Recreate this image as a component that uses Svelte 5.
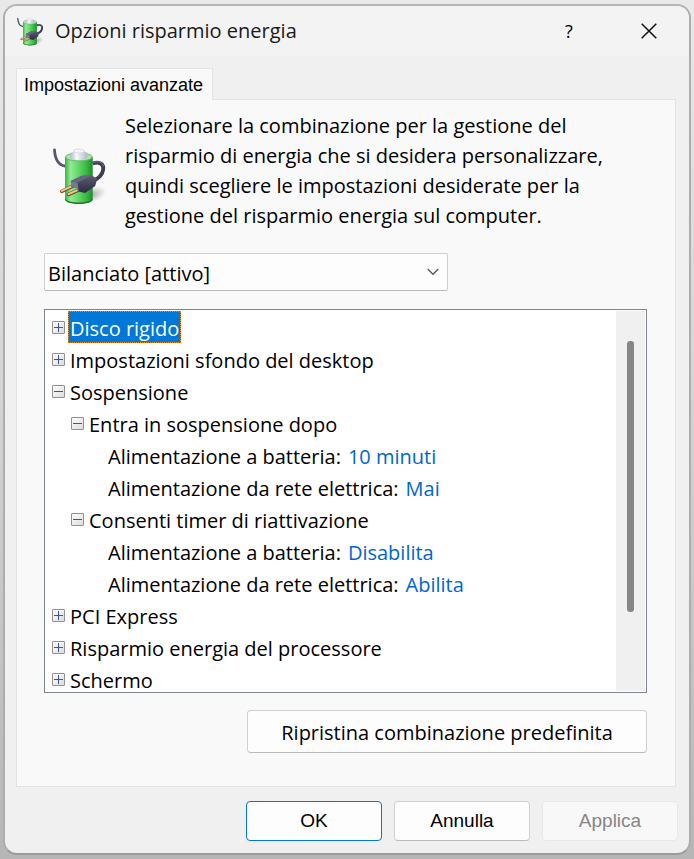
<script>
  let plan = $state('active');
  let selected = $state('disk');
  let nodes = $state([
    { id: 'disk', level: 0, open: false, label: 'Disco rigido' },
    { id: 'desktop', level: 0, open: false, label: 'Impostazioni sfondo del desktop' },
    { id: 'sleep', level: 0, open: true, label: 'Sospensione' },
    { id: 'sleep-after', level: 1, open: true, label: 'Entra in sospensione dopo', parents: ['sleep'] },
    { id: 'after-battery', level: 2, label: 'Alimentazione a batteria:', value: '10 minuti', parents: ['sleep', 'sleep-after'] },
    { id: 'after-mains', level: 2, label: 'Alimentazione da rete elettrica:', value: 'Mai', parents: ['sleep', 'sleep-after'] },
    { id: 'timers', level: 1, open: true, label: 'Consenti timer di riattivazione', parents: ['sleep'] },
    { id: 'timers-battery', level: 2, label: 'Alimentazione a batteria:', value: 'Disabilita', parents: ['sleep', 'timers'] },
    { id: 'timers-mains', level: 2, label: 'Alimentazione da rete elettrica:', value: 'Abilita', parents: ['sleep', 'timers'] },
    { id: 'pci', level: 0, open: false, label: 'PCI Express' },
    { id: 'cpu', level: 0, open: false, label: 'Risparmio energia del processore' },
    { id: 'screen', level: 0, open: false, label: 'Schermo' }
  ]);
  let visible = $derived(
    nodes.filter((n) => (n.parents ?? []).every((p) => nodes.find((m) => m.id === p).open))
  );
</script>

{#snippet battery()}
  <svg viewBox="0 0 54 60" aria-hidden="true">
    <defs>
      <linearGradient id="cell" x1="0" x2="1">
        <stop offset="0" stop-color="#3fae46" />
        <stop offset="0.2" stop-color="#93ea94" />
        <stop offset="0.5" stop-color="#62d567" />
        <stop offset="0.8" stop-color="#33b53f" />
        <stop offset="1" stop-color="#1a8a28" />
      </linearGradient>
      <linearGradient id="cap" x1="0" x2="1">
        <stop offset="0" stop-color="#b4bac6" />
        <stop offset="0.35" stop-color="#f7f9fc" />
        <stop offset="1" stop-color="#b3b9c6" />
      </linearGradient>
      <linearGradient id="plug" x1="0" y1="0" x2="0" y2="1">
        <stop offset="0" stop-color="#5c5e74" />
        <stop offset="0.5" stop-color="#434459" />
        <stop offset="1" stop-color="#2a2b40" />
      </linearGradient>
      <radialGradient id="shade">
        <stop offset="0" stop-color="#777" stop-opacity="0.65" />
        <stop offset="1" stop-color="#999" stop-opacity="0" />
      </radialGradient>
    </defs>
    <ellipse cx="38" cy="50" rx="16" ry="8" fill="url(#shade)" transform="rotate(-18 38 50)" />
    <path d="M1.500 5C2 13 5 20 12 21" fill="none" stroke="#55576e" stroke-width="2.800" stroke-linecap="round" />
    <path d="M12 12v42c0 6 27.700 6 27.700 0V12z" fill="url(#cell)" />
    <path d="M12 53c1 6 26.700 6 27.700 0v1.500c-1 6-26.700 6-27.700 0z" fill="#1a7a26" />
    <ellipse cx="25.850" cy="12" rx="13.300" ry="4" fill="#b9dfbf" stroke="#5cc065" stroke-width="1" />
    <path d="M17.500 8v4c0 4 17 4 17 0V8l-5-3h-6z" fill="url(#cap)" />
    <ellipse cx="26" cy="6" rx="5.500" ry="2" fill="#f4f6fa" stroke="#c6ccd6" stroke-width="0.600" />
    <path d="M39.700 18.500c6-2 11.500 0 10.500 6-.7 5-5 9-9.500 11" fill="none" stroke="#3b3d54" stroke-width="3.800" />
    <path d="M40 17.500c5-1.500 9.500-.5 10.500 4" fill="none" stroke="#777a92" stroke-width="0.900" />
    <path d="M20 41L8.700 46.300M26.500 44.500l-11 5" stroke="#7d552e" stroke-width="3.600" stroke-linecap="round" />
    <path d="M20 40.600L8.700 45.900M26.500 44.100l-11 5" stroke="#efc894" stroke-width="1.900" stroke-linecap="round" />
    <path d="M17.700 36l11-5.300 10-.4 5.500 3.700-2 7L32 48l-7-1.800-1-3.400-5.500-.8z" fill="url(#plug)" />
    <path d="M17.700 36l6.800 1.800 1.300 8.600-1-.3-1-3.300-5.300-.8z" fill="#77798e" />
    <path d="M17.700 36l11-5.300 10-.4-14.200 7.500z" fill="#65677e" />
  </svg>
{/snippet}

<main class="window">
  <header>
    <span class="app-icon">{@render battery()}</span>
    <h1>Opzioni risparmio energia</h1>
    <button class="caption help" aria-label="Guida">?</button>
    <button class="caption" aria-label="Chiudi">
      <svg width="16" height="16" viewBox="0 0 16 16"><path d="M.7.7l14.600 14.600M15.300.7L.7 15.300" stroke="#111" stroke-width="1.500" /></svg>
    </button>
  </header>

  <div class="content">
    <div class="tabs" role="tablist">
      <button class="tab" role="tab" id="tab-advanced" aria-selected="true" aria-controls="panel">Impostazioni avanzate</button>
    </div>
    <section class="panel" id="panel" role="tabpanel" aria-labelledby="tab-advanced">
      <div class="intro">
        <span class="intro-icon">{@render battery()}</span>
        <p>Selezionare la combinazione per la gestione del risparmio di energia che si desidera personalizzare, quindi scegliere le impostazioni desiderate per la gestione del risparmio energia sul computer.</p>
      </div>

      <div class="combo">
        <select aria-label="Combinazione" bind:value={plan}>
          <option value="active">Bilanciato [attivo]</option>
        </select>
        <svg width="12" height="8" viewBox="0 0 12 8" aria-hidden="true"><path d="M.7 1l5.300 5.300L11.300 1" fill="none" stroke="#555" stroke-width="1.300" /></svg>
      </div>

      <div class="tree-box">
        <ul class="tree" role="tree" aria-label="Impostazioni">
          {#each visible as node (node.id)}
            <li class="row level-{node.level}" role="treeitem" aria-level={node.level + 1} aria-expanded={node.open} aria-selected={selected === node.id}>
              {#if node.value === undefined}
                <button class="toggle" aria-label={node.open ? 'Comprimi' : 'Espandi'} onclick={() => (node.open = !node.open)}>
                  <svg width="11" height="11" viewBox="0 0 11 11"><path d={node.open ? 'M1 5.500h9' : 'M1 5.500h9M5.500 1v9'} stroke="#3a55a0" stroke-width="1" /></svg>
                </button>
              {/if}
              <button class="label" class:selected={selected === node.id} onclick={() => (selected = node.id)}>{node.label}</button>
              {#if node.value !== undefined}
                <a href="#{node.id}">{node.value}</a>
              {/if}
            </li>
          {/each}
        </ul>
        <div class="scrollbar"><div class="thumb"></div></div>
      </div>

      <div class="restore-line">
        <button class="push restore">Ripristina combinazione predefinita</button>
      </div>
    </section>
  </div>

  <footer>
    <button class="push default">OK</button>
    <button class="push">Annulla</button>
    <button class="push" disabled>Applica</button>
  </footer>
</main>

<style>
  :global(body) {
    background: linear-gradient(#e9e9e9, #d2d2d2 50%, #b6b6b6);
  }
  :global(#app) {
    padding: 4px 3px;
  }
  * {
    box-sizing: border-box;
  }
  button,
  select {
    font: inherit;
    color: inherit;
    margin: 0;
    padding: 0;
    border: 0;
    background: none;
  }
  svg {
    display: block;
  }
  .window {
    display: flex;
    flex-direction: column;
    border: 2px solid;
    border-color: #b5b5b5 #adadad #9b9b9b;
    border-radius: 14px;
    background: #f0f0f0;
    overflow: hidden;
    font: 20px/30px 'Open Sans', 'Noto Sans', sans-serif;
    color: #000;
  }
  header {
    display: flex;
    align-items: center;
    height: 50px;
    padding-left: 12px;
    background: #f3f3f3;
  }
  .app-icon svg {
    width: 27px;
    height: 30px;
  }
  h1 {
    flex: 1;
    margin: 0 0 0 11px;
    font-size: 20px;
    font-weight: 400;
    color: #1a1a1a;
  }
  .caption {
    display: flex;
    align-items: center;
    justify-content: center;
    width: 80px;
    height: 50px;
  }
  .help {
    font-size: 18px;
  }
  .content {
    padding: 12px 13px 0 11px;
  }
  .tabs {
    display: flex;
  }
  .tab {
    height: 32px;
    margin-bottom: -1px;
    padding: 0 9px 0 7px;
    border: 1px solid #e3e3e3;
    border-bottom: 0;
    background: #f9f9f9;
    font: 18px/30px 'Liberation Sans', Arial, sans-serif;
    z-index: 1;
  }
  .panel {
    padding: 11px 28px 33px 27px;
    border: 1px solid #e3e3e3;
    background: #f9f9f9;
  }
  .intro {
    display: flex;
    align-items: center;
  }
  .intro-icon {
    padding: 7px 0 0 9px;
  }
  .intro-icon svg {
    width: 54px;
    height: 60px;
  }
  p {
    flex: 1;
    max-width: 500px;
    margin: 0 0 0 18px;
  }
  .combo {
    position: relative;
    width: 67%;
    margin-top: 22px;
  }
  .combo select {
    display: block;
    width: 100%;
    height: 38px;
    padding: 3px 32px 0 3px;
    border: 1px solid #cfcfcf;
    border-bottom-color: #bababa;
    border-radius: 2px;
    background: #fdfdfd;
    appearance: none;
  }
  .combo svg {
    position: absolute;
    right: 9px;
    top: 15px;
    pointer-events: none;
  }
  .tree-box {
    display: flex;
    height: 384px;
    margin-top: 18px;
    padding: 1px;
    border: 1px solid #7f858f;
    background: #fff;
  }
  .tree {
    flex: 1;
    margin: 0;
    padding: 0;
    list-style: none;
    overflow: hidden;
  }
  .row {
    display: flex;
    align-items: center;
    height: 32px;
    padding-left: 6px;
    white-space: nowrap;
  }
  .level-1 {
    padding-left: 25px;
  }
  .level-2 {
    padding-left: 60px;
  }
  .toggle {
    width: 13px;
    height: 13px;
    margin-right: 3px;
    border: 1px solid #919191;
    border-radius: 1px;
    background: linear-gradient(135deg, #fff, #dcdcdc);
  }
  .label {
    height: 32px;
    padding: 3px 2px 0;
    line-height: 30px;
  }
  .selected {
    padding: 2px 1px 0;
    border: 1px dotted #f08a28;
    background: #0078d7;
    color: #fff;
  }
  .row a {
    margin-left: 5px;
    padding-top: 3px;
    color: #0066cc;
    text-decoration: none;
  }
  .scrollbar {
    width: 29px;
    padding: 30px 11px 0;
    background: #f0f0f0;
  }
  .thumb {
    height: 271px;
    border-radius: 3px;
    background: #868686;
  }
  .restore-line {
    display: flex;
    justify-content: flex-end;
    margin-top: 17px;
  }
  .push {
    width: 136px;
    height: 40px;
    border: 1px solid #d0d0d0;
    border-bottom-color: #bababa;
    border-radius: 4px;
    background: #fdfdfd;
    font: 19px/30px 'Liberation Sans', Arial, sans-serif;
  }
  .restore {
    width: 400px;
    height: 43px;
    padding-top: 2px;
    font: 20px/30px 'Open Sans', 'Noto Sans', sans-serif;
  }
  .default {
    border-color: #0078d4;
  }
  .push:disabled {
    border-color: #e8e8e8;
    background: #f8f8f8;
    color: #868686;
  }
  footer {
    display: flex;
    justify-content: flex-end;
    gap: 12px;
    padding: 14px 11px 12px;
  }
</style>
